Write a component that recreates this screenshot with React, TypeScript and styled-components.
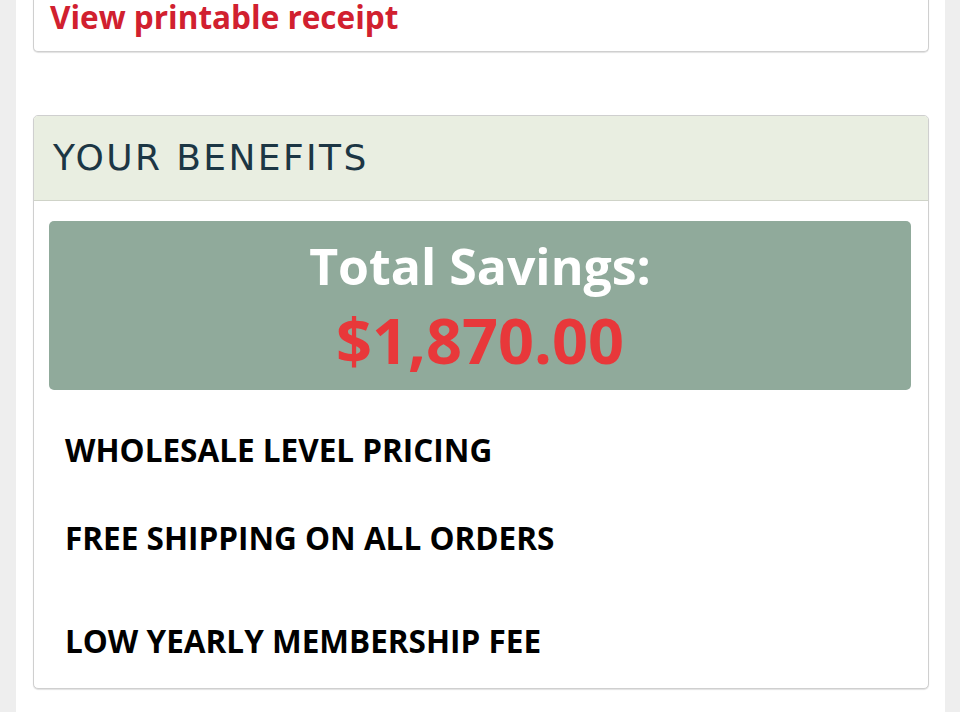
import React from "react";
import styled, { createGlobalStyle } from "styled-components";

const Global = createGlobalStyle`
  html, body { margin: 0; padding: 0; background: #eeeeee; }
  body { font-family: "Open Sans", "Liberation Sans", sans-serif; overflow: hidden; }
`;

const Column = styled.main`
  margin: 0 15px 0 16px;
  background: #ffffff;
  min-height: 712px;
  padding: 0 16px 24px 17px;
  box-sizing: border-box;
  display: flex;
  flex-direction: column;
  gap: 63px;
`;

const Card = styled.section`
  background: #ffffff;
  border: 1px solid #cfcfcf;
  border-radius: 5px;
  box-shadow: 0 1px 1px rgba(0, 0, 0, 0.12);
  overflow: hidden;
`;

const ReceiptCard = styled(Card)`
  margin-top: -20px;
  border-top: none;
  border-top-left-radius: 0;
  border-top-right-radius: 0;
  padding: 0 16px;
  height: 72px;
  box-sizing: border-box;
`;

const ReceiptLink = styled.a`
  display: block;
  color: #d1202f;
  font-weight: 700;
  font-size: 31.5px;
  line-height: 40px;
  text-decoration: none;
  margin-top: 17px;
`;

const Header = styled.header`
  background: #e9eee1;
  border-bottom: 1px solid #cfd3c8;
  height: 84px;
  display: flex;
  align-items: center;
  padding: 0 19px;
`;

const HeaderTitle = styled.h2`
  margin: 0;
  font-family: "DejaVu Sans", sans-serif;
  font-weight: 400;
  font-size: 36px;
  letter-spacing: 2.4px;
  color: #1c3644;
  line-height: 1;
`;

const Body = styled.div`
  padding: 20px 17px 0 15px;
`;

const SavingsBox = styled.div`
  background: #90aa9b;
  border-radius: 5px;
  height: 169px;
  display: flex;
  flex-direction: column;
  align-items: center;
  justify-content: center;
  text-align: center;
`;

const SavingsLabel = styled.div`
  color: #ffffff;
  font-weight: 700;
  font-size: 50px;
  line-height: 68px;
`;

const SavingsAmount = styled.div`
  color: #e8383a;
  font-weight: 700;
  font-size: 63px;
  line-height: 80px;
`;

const BenefitList = styled.ul`
  list-style: none;
  margin: 0;
  padding: 0 0 27px 31px;
`;

const Benefit = styled.li<{ $gap: number }>`
  margin-top: ${(p) => p.$gap}px;
  line-height: 40px;
  font-weight: 700;
  font-size: 31.5px;
  color: #000000;
`;

export default function App() {
  return (
    <>
      <Global />
      <Column>
        <ReceiptCard>
          <ReceiptLink href="#">View printable receipt</ReceiptLink>
        </ReceiptCard>
        <Card>
          <Header>
            <HeaderTitle>YOUR BENEFITS</HeaderTitle>
          </Header>
          <Body>
            <SavingsBox>
              <SavingsLabel>Total Savings:</SavingsLabel>
              <SavingsAmount>$1,870.00</SavingsAmount>
            </SavingsBox>
          </Body>
          <BenefitList>
            <Benefit $gap={40}>WHOLESALE LEVEL PRICING</Benefit>
            <Benefit $gap={48}>FREE SHIPPING ON ALL ORDERS</Benefit>
            <Benefit $gap={63}>LOW YEARLY MEMBERSHIP FEE</Benefit>
          </BenefitList>
        </Card>
      </Column>
    </>
  );
}
